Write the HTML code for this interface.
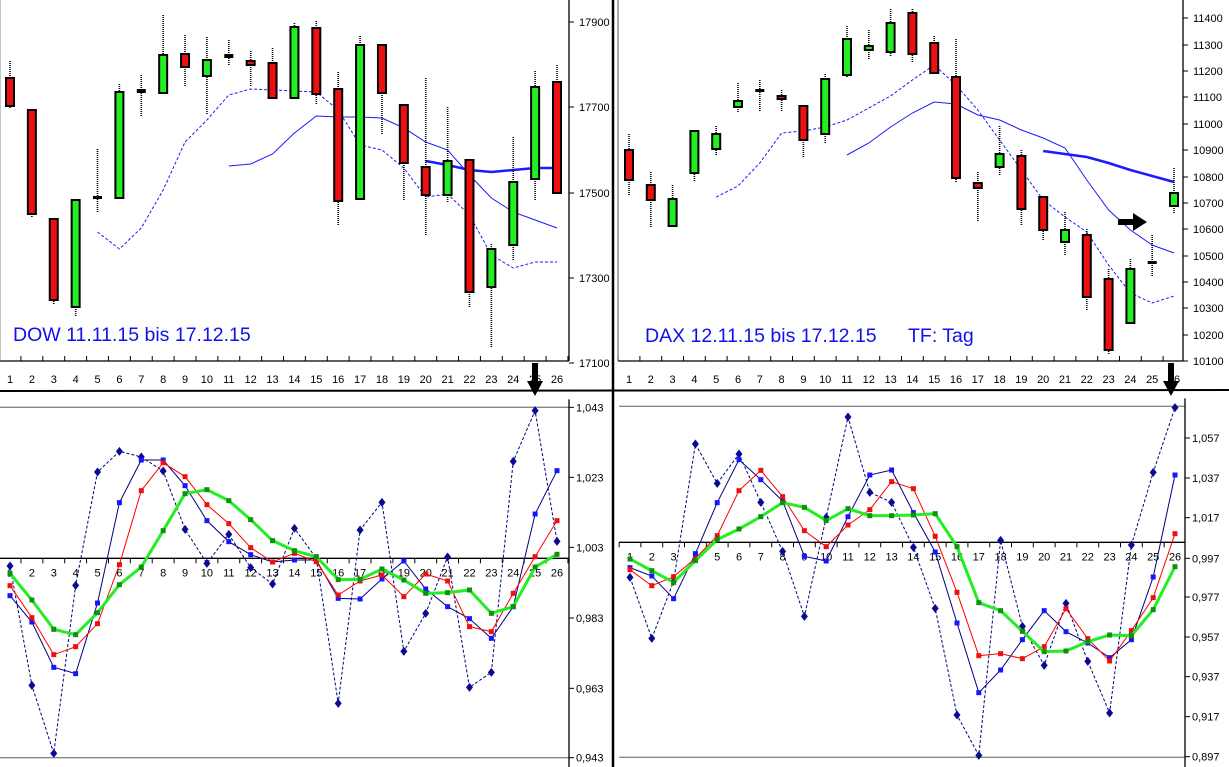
<!DOCTYPE html>
<html><head><meta charset="utf-8"><style>
html,body{margin:0;padding:0;background:#fff;}
svg{display:block;font-family:"Liberation Sans",sans-serif;}
</style></head><body>
<svg id="s" width="1229" height="767" viewBox="0 0 1229 767" xmlns="http://www.w3.org/2000/svg">
<rect width="1229" height="767" fill="#fff"/>
<text x="13" y="341" font-size="19.5" fill="#1010ee">DOW 11.11.15 bis 17.12.15</text>
<text x="645" y="342" font-size="19.5" fill="#1010ee">DAX 12.11.15 bis 17.12.15 <tspan x="908">TF: Tag</tspan></text>
</svg>
<script>
var S=document.getElementById('s'),NS='http://www.w3.org/2000/svg';
function el(t,a,tx){var e=document.createElementNS(NS,t);for(var k in a)e.setAttribute(k,a[k]);if(tx!=null)e.textContent=tx;S.appendChild(e);return e;}
function line(x1,y1,x2,y2,c,w,d){var a={x1:x1,y1:y1,x2:x2,y2:y2,stroke:c,'stroke-width':w};if(d)a['stroke-dasharray']=d;return el('line',a);}
function poly(pts,c,w,d){var a={points:pts.map(function(p){return p[0]+','+p[1]}).join(' '),fill:'none',stroke:c,'stroke-width':w};if(d)a['stroke-dasharray']=d;el('polyline',a);}
function txt(x,y,s,sz,anchor){el('text',{x:x,y:y,'font-size':sz||11,'text-anchor':anchor||'start',fill:'#000'},s);}

function topPanel(x0,x1,xs,axisX,axisY,left,labels,candles,ma){
  line(left,axisY,axisX,axisY,'#000',1.3);
  line(axisX,0,axisX,axisY,'#000',1.3);
  for(var i=0;i<=26;i++){var tx=x0+(i-0.5)*xs;if(tx<axisX)line(tx,axisY,tx,axisY-5,'#000',1);}
  for(var i=1;i<=26;i++)txt(x0+(i-1)*xs,axisY+22,String(i),11,'middle');
  labels.forEach(function(l){line(axisX,l[1],axisX+5,l[1],'#000',1);txt(axisX+10,l[1]+4,l[0],11);});
  ma.forEach(function(m){var pts=m.y.map(function(y,j){return [x0+(m.s-1+j)*xs,y]});poly(pts,'#1a1aff',m.w,m.d);});
  candles.forEach(function(c,i){
    var x=x0+i*xs;
    line(x,c[3],x,c[4],'#000',1.6,'1,1');
    if(c[2]=='k'){el('rect',{x:x-4.5,y:c[0]-1,width:9,height:Math.max(3,c[1]-c[0]+2),fill:'#000'});}
    else el('rect',{x:x-4,y:c[0],width:8,height:Math.max(2,c[1]-c[0]),fill:c[2]=='r'?'#ee1010':'#22ee22',stroke:'#000','stroke-width':2});
  });
}
var dow=[[78,106,'r',61,109],[110,214,'r',110,217],[219,300,'r',219,305],[200,307,'g',199,316],[197,197,'k',149,213],[92,198,'g',84,199],[90,92,'k',75,116],[55,93,'g',15,93],[54,67,'r',35,87],[60,76,'g',37,115],[55,57,'k',40,65],[61,65,'r',51,87],[63,98,'r',48,100],[27,98,'g',23,99],[28,94,'r',21,105],[89,201,'r',72,225],[45,199,'g',36,200],[45,93,'r',45,134],[105,163,'r',105,200],[167,195,'r',78,235],[161,195,'g',107,203],[160,292,'r',160,307],[249,287,'g',244,348],[182,245,'g',137,260],[87,179,'g',71,200],[82,193,'r',65,195]];
topPanel(10,0,21.88,569,361,0,[['17900',22],['17700',107],['17500',193],['17300',278],['17100',363]],dow,[
 {s:5,w:1,d:'3,2',y:[232,249,228,190,142,120,95,89,90,91,92,110,145,150,168,197,194,215,255,268,262,262]},
 {s:11,w:1,y:[166,164,154,133,116,117,117,118,128,142,150,175,198,212,220,228]},
 {s:20,w:2.5,y:[161,165,170,172,170,168,168]}]);
var dax=[[150,180,'r',134,195],[185,200,'r',172,227],[199,226,'g',185,227],[131,173,'g',130,181],[134,149,'g',126,156],[101,107,'g',83,112],[90,91,'k',80,111],[96,99,'r',90,111],[106,140,'r',106,158],[79,134,'g',74,144],[39,75,'g',26,77],[46,50,'g',30,60],[23,52,'g',9,57],[13,54,'r',9,62],[43,73,'r',36,74],[77,178,'r',39,182],[183,188,'r',172,221],[154,167,'g',126,175],[156,209,'r',150,225],[197,230,'r',197,241],[230,242,'g',212,256],[235,297,'r',229,310],[279,350,'r',269,355],[269,323,'g',259,325],[262,262,'k',235,276],[193,206,'g',168,214]];
topPanel(629,0,21.8,1183,361,618,[['11400',18],['11300',45],['11200',71],['11100',97],['11000',124],['10900',150],['10800',177],['10700',203],['10600',229],['10500',256],['10400',282],['10300',308],['10200',335],['10100',361]],dax,[
 {s:5,w:1,d:'3,2',y:[197,186,163,133,131,127,120,108,96,80,65,85,110,140,170,200,217,232,265,293,303,296]},
 {s:11,w:1,y:[155,143,127,113,102,104,115,120,130,138,148,180,210,230,245,253]},
 {s:20,w:2.5,y:[151,154,157,163,170,176,182]}]);
line(618,0,618,361,'#555',1);
line(0,0,0,361,'#888',1);
el('polygon',{points:'1118,219 1133,219 1133,213 1147,222 1133,231 1133,225 1118,225',fill:'#000'});
function dn(x){el('polygon',{points:(x-3)+',363 '+(x+3)+',363 '+(x+3)+',381 '+(x+8)+',381 '+x+',396 '+(x-8)+',381 '+(x-3)+',381',fill:'#000'});}
dn(535);dn(1171);
line(0,391,1229,390,'#000',2);
line(613,0,613,767,'#000',2.5);

function botPanel(x0,xs,left,axisX,top,bot,zeroY,labs,lblY,ser){
  line(left,top,axisX,top,'#888',1.3);line(left,bot,axisX,bot,'#888',1.3);
  if(left>620)line(left,top,left,bot,'#888',1.3);
  line(axisX,top-8,axisX,767,'#000',1.3);
  line(left,zeroY,axisX,zeroY,'#000',1.3);
  for(var i=0;i<=26;i++){var tx=x0+(i-0.5)*xs;if(tx>left&&tx<axisX)line(tx,zeroY,tx,zeroY+5,'#000',1);}
  labs.forEach(function(l){line(axisX,l[1],axisX+5,l[1],'#000',1);txt(axisX+7,l[1]+4,l[0],11);});
  for(var i=1;i<=26;i++)txt(x0+(i-1)*xs,lblY,String(i),11,'middle');
  function P(a){return a.map(function(y,j){return [x0+j*xs,380+y/3]});}
  var d=P(ser.d),b=P(ser.b),r=P(ser.r),g=P(ser.g);
  poly(d,'#000080',1,'3,2');
  d.forEach(function(p){el('polygon',{points:p[0]+','+(p[1]-4.5)+' '+(p[0]+3.5)+','+p[1]+' '+p[0]+','+(p[1]+4.5)+' '+(p[0]-3.5)+','+p[1],fill:'#0a0a90'});});
  poly(b,'#000080',1);b.forEach(function(p){el('rect',{x:p[0]-2.5,y:p[1]-2.5,width:5,height:5,fill:'#1515ff'});});
  poly(r,'#ff0000',1);r.forEach(function(p){el('rect',{x:p[0]-2.5,y:p[1]-2.5,width:5,height:5,fill:'#ee1010'});});
  poly(g,'#22ee22',3);g.forEach(function(p){el('rect',{x:p[0]-2.5,y:p[1]-2.5,width:5,height:5,fill:'#109010'});});
}
function ly(z){return 380+z/3;}
botPanel(10,21.88,0,569,ly(82),ly(1133),ly(535),[['1,043',ly(82)],['1,023',ly(292)],['1,003',ly(502)],['0,983',ly(714)],['0,963',ly(925)],['0,943',ly(1133)]],ly(590),{
 d:[558,916,1120,616,276,214,231,273,448,550,463,563,612,445,535,970,450,367,814,700,531,922,877,244,92,484],
 b:[647,726,862,881,669,368,240,240,317,422,485,524,546,540,540,655,657,597,543,627,680,716,775,680,402,272],
 r:[617,713,824,800,731,554,332,248,290,374,431,503,546,520,545,645,603,585,650,582,603,740,755,640,530,422],
 g:[580,660,748,764,698,614,561,452,341,329,362,419,482,512,530,599,598,567,600,640,638,630,700,680,561,523]});
botPanel(630,21.8,619,1185,ly(79),ly(1132),ly(487),[['1,057',ly(174)],['1,037',ly(294)],['1,017',ly(413)],['0,997',ly(535)],['0,977',ly(651)],['0,957',ly(771)],['0,937',ly(890)],['0,917',ly(1010)],['0,897',ly(1130)]],ly(542),{
 d:[592,775,604,192,310,222,367,514,709,412,111,337,367,502,685,1005,1126,481,739,856,670,844,999,495,277,83],
 b:[563,588,656,521,368,239,299,363,529,543,410,285,270,398,516,729,938,870,779,692,755,789,833,779,591,285],
 r:[569,617,590,535,467,332,271,350,452,500,435,389,305,326,469,637,827,821,836,800,686,776,843,752,653,461],
 g:[537,572,607,542,479,447,410,368,382,422,386,407,407,405,401,500,668,692,754,815,813,785,765,767,689,560]});
</script>
</body></html>
